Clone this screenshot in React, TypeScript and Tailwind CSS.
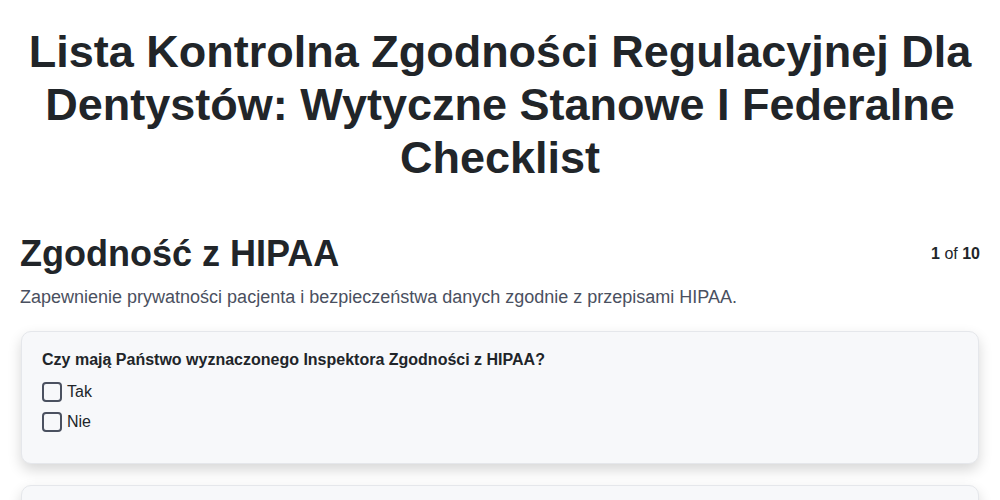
import React from "react";

function Option({ label }: { label: string }) {
  return (
    <label className="flex items-center h-6 gap-[5px] text-base text-[#212529]">
      <span className="w-5 h-5 border-2 border-[#4b5160] rounded-[4px] bg-transparent shrink-0" />
      <span>{label}</span>
    </label>
  );
}

function Card({ question }: { question: string }) {
  return (
    <div className="mx-px rounded-[10px] border border-[#e5e7eb] bg-[#f7f8fa] px-5 pt-4 pb-[29px] shadow-[0_6px_14px_rgba(0,0,0,0.16)]">
      <div className="text-base leading-6 font-bold text-[#212529]">{question}</div>
      <div className="mt-[8px] flex flex-col gap-[6px]">
        <Option label="Tak" />
        <Option label="Nie" />
      </div>
    </div>
  );
}

export default function App() {
  return (
    <div
      className="min-h-[500px] bg-white px-5 pt-[25px] text-[#212529]"
      style={{ fontFamily: '"Liberation Sans", Arial, sans-serif' }}
    >
      <h1 className="text-center font-bold text-[45px] leading-[53px] text-[#212529]">
        Lista Kontrolna Zgodności Regulacyjnej Dla Dentystów: Wytyczne Stanowe I Federalne Checklist
      </h1>

      <div className="mt-[50px] flex items-center justify-between">
        <h2 className="font-bold text-4xl leading-10 text-[#212529]">Zgodność z HIPAA</h2>
        <div className="text-base text-[#212529]">
          <span className="font-bold">1</span> of <span className="font-bold">10</span>
        </div>
      </div>
      <p className="mt-[9px] text-lg leading-7 text-[#4a5060]">
        Zapewnienie prywatności pacjenta i bezpieczeństwa danych zgodnie z przepisami HIPAA.
      </p>

      <div className="mt-5 flex flex-col gap-[21px]">
        <Card question="Czy mają Państwo wyznaczonego Inspektora Zgodności z HIPAA?" />
        <Card question="Czy przeprowadzają Państwo regularne szkolenia z HIPAA?" />
      </div>
    </div>
  );
}
